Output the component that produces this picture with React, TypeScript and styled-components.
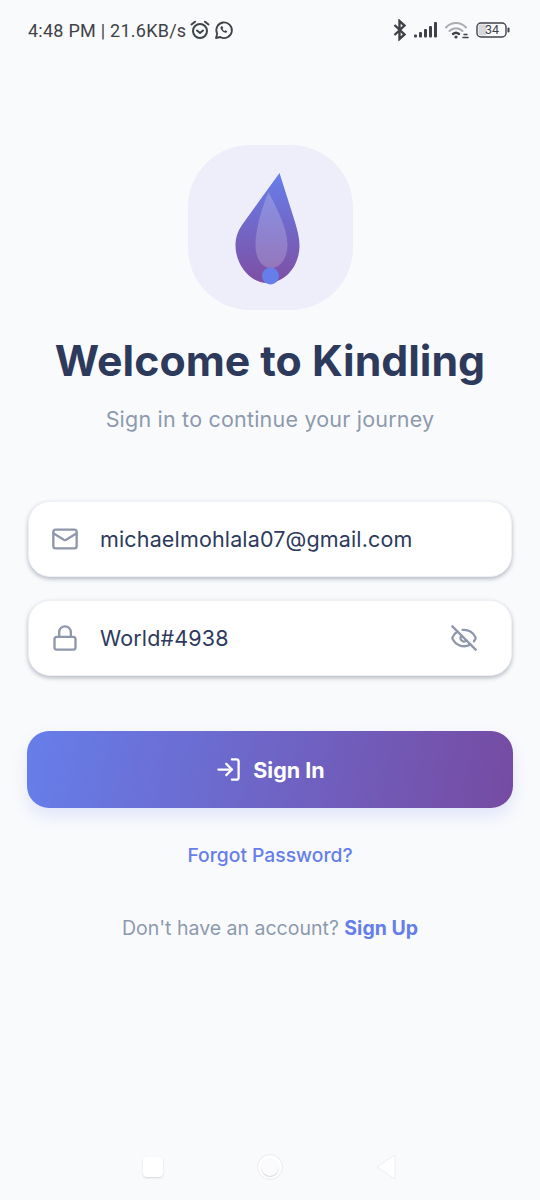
import React from 'react';
import styled, { createGlobalStyle } from 'styled-components';
import { Mail, Lock, EyeOff, LogIn } from 'lucide-react';

const GlobalStyle = createGlobalStyle`
  html, body {
    margin: 0;
    padding: 0;
    background: #f9fafc;
  }
  * {
    box-sizing: border-box;
  }
`;

const Screen = styled.div`
  width: 540px;
  height: 1200px;
  background: #f9fafc;
  font-family: Inter, "Liberation Sans", sans-serif;
  display: flex;
  flex-direction: column;
  overflow: hidden;
`;

const StatusBar = styled.div`
  height: 60px;
  padding: 0 30px 0 28px;
  display: flex;
  align-items: center;
  justify-content: space-between;
  color: #3f4347;
`;

const StatusGroup = styled.div<{ $gap: number }>`
  display: flex;
  align-items: center;
  gap: ${(p) => p.$gap}px;
`;

const StatusText = styled.span`
  font-family: Roboto, sans-serif;
  font-size: 18px;
  letter-spacing: 0.25px;
  white-space: nowrap;
`;

const Main = styled.main`
  flex: 1;
  display: flex;
  flex-direction: column;
  align-items: center;
  padding: 85px 27px 0 27px;
`;

const LogoTile = styled.div`
  width: 165px;
  height: 165px;
  margin-left: 1px;
  border-radius: 62px;
  background: #eeeefb;
  display: flex;
  align-items: center;
  justify-content: center;
`;

const Title = styled.h1`
  margin: 23px 0 0;
  font-size: 42.8px;
  line-height: 56px;
  font-weight: 700;
  color: #2d3a5c;
  white-space: nowrap;
`;

const Subtitle = styled.p`
  margin: 16px 0 0;
  font-size: 21.5px;
  line-height: 28px;
  letter-spacing: 0.2px;
  color: #8d9aad;
  white-space: nowrap;
`;

const Form = styled.div`
  width: 100%;
  margin-top: 68px;
  padding: 0 1px;
  display: flex;
  flex-direction: column;
  gap: 23px;
`;

const Field = styled.div`
  height: 76px;
  border-radius: 22px;
  background: #ffffff;
  border: 1px solid #eef1f6;
  box-shadow: 0 2px 4px rgba(70, 78, 100, 0.38);
  display: flex;
  align-items: center;
  padding: 0 33px 0 22px;
  color: #8f97ab;
`;

const FieldValue = styled.span`
  flex: 1;
  margin-left: 21px;
  font-size: 21.5px;
  letter-spacing: 0.15px;
  color: #2d3a5c;
  white-space: nowrap;
`;

const SubmitButton = styled.button`
  width: 100%;
  height: 77px;
  margin-top: 55px;
  border: none;
  border-radius: 22px;
  background: linear-gradient(100deg, #667eea 0%, #764ba2 100%);
  box-shadow: 0 8px 16px rgba(102, 126, 234, 0.16);
  color: #ffffff;
  font-family: inherit;
  font-size: 21.5px;
  font-weight: 700;
  display: flex;
  align-items: center;
  justify-content: center;
  gap: 11px;
`;

const ForgotLink = styled.a`
  margin-top: 35px;
  font-size: 19.3px;
  line-height: 24px;
  font-weight: 500;
  color: #667eea;
`;

const SignUpRow = styled.p`
  margin: 49px 0 0;
  font-size: 19.5px;
  line-height: 24px;
  color: #8d9aad;
`;

const SignUpLink = styled.a`
  font-weight: 700;
  color: #667eea;
`;

const NavBar = styled.div`
  height: 84px;
  padding: 18px 144px 0 143px;
  display: flex;
  align-items: center;
  justify-content: space-between;
`;

const NavSquare = styled.div`
  width: 20px;
  height: 20px;
  border-radius: 4px;
  background: #ffffff;
  box-shadow: 0 1px 2px rgba(80, 90, 110, 0.22);
`;

const NavCircle = styled.div`
  width: 26px;
  height: 26px;
  border-radius: 50%;
  background: #ffffff;
  border: 1.5px solid #e9eaee;
  display: flex;
  align-items: center;
  justify-content: center;
  &::after {
    content: '';
    width: 18px;
    height: 18px;
    border-radius: 50%;
    background: #fbfbfd;
    box-shadow: 0 1px 1px rgba(80, 90, 110, 0.25);
  }
`;

const AlarmIcon = () => (
  <svg width="20" height="20" viewBox="0 0 20 20" fill="none" stroke="#3f4347" strokeWidth="2" strokeLinecap="round">
    <circle cx="10" cy="11" r="7" />
    <path d="M7 10.500l3 2.500 3-2.500" />
    <path d="M1.500 4.500L5 1.700M18.500 4.500L15 1.700" />
  </svg>
);

const ChatIcon = () => (
  <svg width="20" height="20" viewBox="0 0 20 20" fill="none" stroke="#3f4347" strokeWidth="1.800" strokeLinejoin="round">
    <path d="M2 18l1.200-4.200A7.800 7.800 0 1 1 6.300 17z" />
    <path
      d="M7.200 6.200c-1 .8-.9 2.200.3 3.900 1.200 1.700 2.700 2.700 4 2.700 1 0 1.800-.8 1.600-1.600l-1.700-1-.9.7c-.8-.3-1.500-1.100-1.900-2l.6-.9-.8-1.800z"
      fill="#3f4347"
      stroke="none"
    />
  </svg>
);

const BluetoothIcon = () => (
  <svg width="14" height="22" viewBox="0 0 14 22" fill="none" stroke="#3f4347" strokeWidth="2.400">
    <path d="M1.500 6l10 9.500L6.500 20V2l5 4.500L1.500 16" />
  </svg>
);

const SignalIcon = () => (
  <svg width="24" height="16" viewBox="0 0 24 16" fill="#3f4347">
    <rect x="0" y="12.500" width="3" height="3" rx="1" />
    <rect x="5" y="10" width="3" height="5.500" rx="1" />
    <rect x="10" y="7" width="3" height="8.500" rx="1" />
    <rect x="15" y="4" width="3" height="11.500" rx="1" />
    <rect x="20" y="0" width="3" height="15.500" rx="1" />
  </svg>
);

const WifiIcon = () => (
  <svg width="24" height="18" viewBox="0 0 24 18" fill="none" strokeLinecap="round">
    <path d="M1 6.500C6.500 .5 15.500 .5 21 6.500" stroke="#a9acb0" strokeWidth="2" />
    <path d="M4.500 10c3.800-3.800 9.200-3.800 13 0" stroke="#a9acb0" strokeWidth="2" />
    <path d="M8 13c2-1.800 4-1.800 6 0" stroke="#3f4347" strokeWidth="2.400" />
    <circle cx="11" cy="16" r="1.600" fill="#3f4347" />
    <path d="M18 16.500h5M19 13.500h3" stroke="#3f4347" strokeWidth="1.500" />
  </svg>
);

const BatteryIcon = () => (
  <svg width="34" height="16" viewBox="0 0 34 16">
    <rect x="1" y="1" width="29" height="14" rx="4" fill="none" stroke="#3f4347" strokeWidth="1.400" />
    <rect x="2.500" y="2.500" width="8" height="11" rx="2" fill="#d5d7da" />
    <rect x="31.500" y="5.500" width="2" height="5" rx="1" fill="#3f4347" />
    <text x="16" y="12.300" textAnchor="middle" fontFamily="Roboto, sans-serif" fontSize="12.500" fill="#3f4347">
      34
    </text>
  </svg>
);

const DropLogo = () => (
  <svg width="100" height="120" viewBox="0 1 100 120">
    <defs>
      <linearGradient id="dropFill" x1="0.5" y1="0" x2="0.5" y2="1">
        <stop offset="0" stopColor="#667eea" />
        <stop offset="1" stopColor="#7e4fa3" />
      </linearGradient>
    </defs>
    <path
      d="M58.500 6L21 58C16 65 14.500 72 14.500 79C14.500 96 28 116 46 116C66 116 78.500 97 78.500 79C78.500 70 76 62 74 55Z"
      fill="url(#dropFill)"
    />
    <path
      d="M47.500 25C42 38 34.500 60 34.500 78C34.500 92 41 101 50 101C60 101 66.500 90 66.500 78C66.500 60 54 38 47.500 25Z"
      fill="#ffffff"
      fillOpacity="0.2"
    />
    <circle cx="49.500" cy="109" r="8.500" fill="#667eea" />
  </svg>
);

const App: React.FC = () => {
  return (
    <Screen>
      <GlobalStyle />
      <StatusBar>
        <StatusGroup $gap={4}>
          <StatusText>4:48 PM | 21.6KB/s</StatusText>
          <AlarmIcon />
          <ChatIcon />
        </StatusGroup>
        <StatusGroup $gap={7}>
          <BluetoothIcon />
          <SignalIcon />
          <WifiIcon />
          <BatteryIcon />
        </StatusGroup>
      </StatusBar>
      <Main>
        <LogoTile>
          <DropLogo />
        </LogoTile>
        <Title>Welcome to Kindling</Title>
        <Subtitle>Sign in to continue your journey</Subtitle>
        <Form>
          <Field>
            <Mail size={28} strokeWidth={2} />
            <FieldValue>michaelmohlala07@gmail.com</FieldValue>
          </Field>
          <Field>
            <Lock size={28} strokeWidth={2} />
            <FieldValue>World#4938</FieldValue>
            <EyeOff size={28} strokeWidth={2} />
          </Field>
        </Form>
        <SubmitButton type="button">
          <LogIn size={27} strokeWidth={2} />
          Sign In
        </SubmitButton>
        <ForgotLink>Forgot Password?</ForgotLink>
        <SignUpRow>
          Don't have an account? <SignUpLink>Sign Up</SignUpLink>
        </SignUpRow>
      </Main>
      <NavBar>
        <NavSquare />
        <NavCircle />
        <svg width="20" height="26" viewBox="0 0 20 26">
          <path d="M19 1V25L1 13Z" fill="#ffffff" stroke="#eceef2" strokeWidth="1" />
        </svg>
      </NavBar>
    </Screen>
  );
};

export default App;
